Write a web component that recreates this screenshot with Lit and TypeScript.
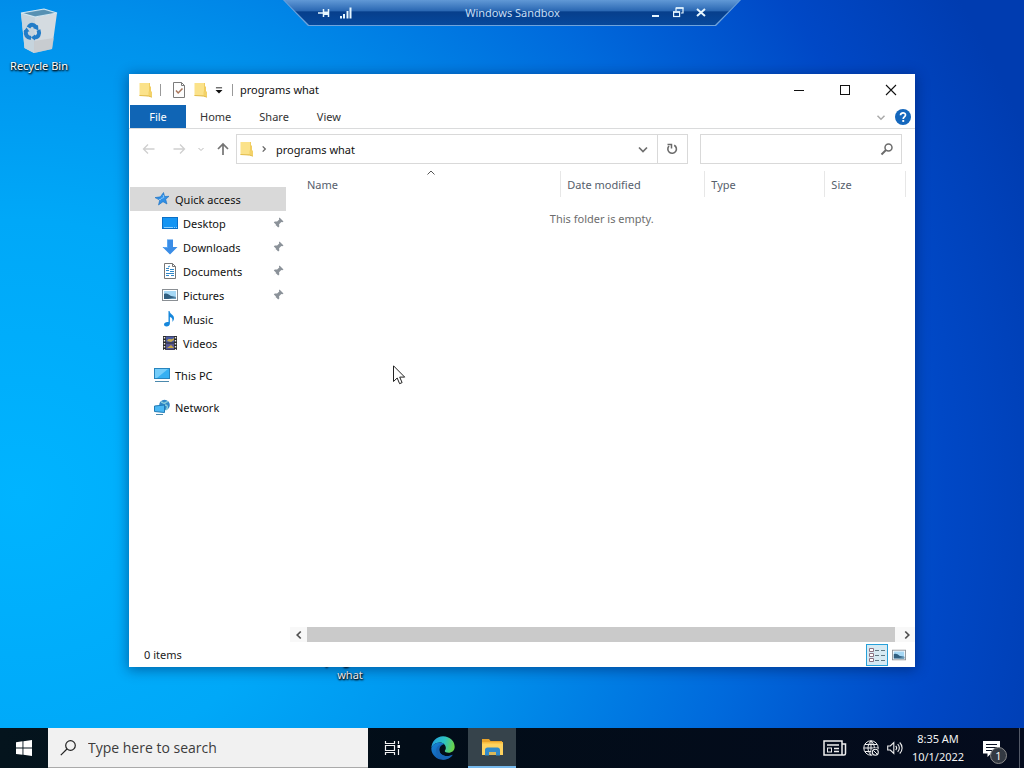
import { LitElement, html, css, svg, nothing } from "lit";
import { customElement, property } from "lit/decorators.js";

const icons: Record<string, unknown> = {
  star: svg`<path d="M9.500 1.500l1.100 4 4.400-.2-3.300 3 1.300 4.700-4-2.300-4.500 3.300 1.200-4.900L1 6.600l5.400-.8z" fill="#2f8fe6" stroke="#1b6fc0" stroke-width=".6"/><path d="M9.200 4l.6 2.600-3 .9M5 8.500l2 .2" stroke="#8cc8fa" fill="none"/>`,
  desktop: svg`<rect x=".5" y="2.500" width="15" height="11" fill="#1595f3" stroke="#0b6fc6"/><path d="M2 12.500h9M12 12.500h1M14 12.500h1" stroke="#8cd0ff"/>`,
  downloads: svg`<path d="M5 .5h6v7.500h4.500L8 15.500.5 8H5z" fill="#3b8de6"/><path d="M5.500 1v7.500H2" stroke="#5aa7f3" fill="none"/>`,
  documents: svg`<path d="M2.500.5h8l3 3v12h-11z" fill="#fff" stroke="#777"/><path d="M10.500.5v3h3" fill="none" stroke="#777"/><path d="M4 5.500h3M4 7.500h3M8 6.500h4M4 10.500h8M4 12.500h3M9 12.500h3M8 8.500h4" stroke="#3188c8"/><path d="M6 4l2-1" stroke="#3188c8"/>`,
  pictures: svg`<rect x=".5" y="2.500" width="15" height="11" fill="#fff" stroke="#8a8f94"/><rect x="2" y="4" width="12" height="8" fill="#a6d8f5"/><path d="M2 7c3-1 4 0 7 2l5 1v2H2z" fill="#315f80"/><path d="M6 12l8-2v2z" fill="#6b9bb8"/>`,
  music: svg`<path d="M7.500 0c.6 3.600 5 3.500 4.500 7.800-.2 1.500-.8 2.200-1.700 3 .8-3-.6-4.300-2.400-4.900v6.600c0 2-1.600 3-3.300 3-1.500 0-2.600-.7-2.600-2 0-1.600 2.200-2.900 4.500-2.400V0z" fill="#1687dc"/>`,
  videos: svg`<rect x="1" y="1" width="14" height="14" fill="#2b2b2b"/><rect x="4" y="1.500" width="8" height="6" fill="#4c5ba0"/><rect x="4" y="8.500" width="8" height="6" fill="#575896"/><path d="M5 6c2-4 4 0 7-3v2l-3 2z" fill="#c6aa4d"/><path d="M5 13l4-3 3 3z" fill="#c9a840"/><path d="M2.500 2v13M13.500 2v13" stroke="#eee" stroke-width="1.400" stroke-dasharray="1.500 1.500"/>`,
  pc: svg`<rect x=".5" y="1.500" width="15" height="10" fill="#35b0f3" stroke="#2884bd"/><path d="M1 2h13L3 11H1z" fill="#75cdfa"/><path d="M1 14.500h14" stroke="#4b89ad"/>`,
  network: svg`<circle cx="10.500" cy="6" r="5.300" fill="#3288c8"/><path d="M7 3c2 0 2 2 4 1s2-2 3-1M11 6c3 0 3 3 1 5" stroke="#89cdda" stroke-width="1.500" fill="none"/><path d="M.5 7l10-1v7.500l-10-1z" fill="#4bb8f4" stroke="#217bb5"/><path d="M2 15.500h7" stroke="#4b89ad"/>`,
  pin: svg`<path d="M9.500 2.500l4 4-1.200.8-1-.2-2.200 2.200.2 2.200-1.100 1-2.500-2.500L2.500 13.500 6 9.600 3.800 7.400l1-1 2.300.2 2.200-2.200-.4-1z" fill="#8b9299"/>`,
  folder: svg`<path d="M2.500 1h9.500v3l1 1v9.500l-10.500-1z" fill="#f1cd60"/><path d="M1.500 1h9.500v12.500l-9.500.5z" fill="#fbe28a"/><path d="M10.500 9.500h3.500v5.500l-3.500-1z" fill="#f3d269"/><path d="M1.500 13.500l9 .5 3.500 1.200" stroke="#e2bc4c" fill="none"/>`,
  props: svg`<path d="M2.500.5h8l3 3v12h-11z" fill="#fdfdfd" stroke="#7b7b7b"/><path d="M10.500.5v3h3" stroke="#7b7b7b" fill="none"/><path d="M5 8.500l2.200 2.500 4.300-4.500" stroke="#a9765c" stroke-width="1.500" fill="none"/>`,
  drop: svg`<path d="M4.500 5.500h7" stroke="#111"/><path d="M4 8h8l-4 4z" fill="#111"/>`,
  min: svg`<path d="M3 8.500h10" stroke="#111"/>`,
  max: svg`<rect x="3.500" y="3.500" width="9" height="9" fill="none" stroke="#111"/>`,
  close: svg`<path d="M3 3l10 10M13 3L3 13" stroke="#111" stroke-width="1.100"/>`,
  chevron: svg`<path d="M4 6.500l4 4 4-4" fill="none" stroke="currentColor" stroke-width="1.700"/>`,
  smallChevron: svg`<path d="M5.500 7l2.500 2.500L10.500 7" fill="none" stroke="currentColor"/>`,
  help: svg`<circle cx="8" cy="8" r="8" fill="#1467bd"/><path d="M5.500 6.200C5.500 3 10.600 3.200 10.500 6c0 1.800-2.300 1.900-2.300 3.900" fill="none" stroke="#fff" stroke-width="1.700"/><rect x="7.300" y="11" width="1.900" height="1.900" fill="#fff"/>`,
  back: svg`<path d="M13.500 8h-11M7 3.500L2.500 8 7 12.500" fill="none" stroke="#cfcfcf" stroke-width="1.300"/>`,
  forward: svg`<path d="M2.500 8h11M9 3.500L13.500 8 9 12.500" fill="none" stroke="#cfcfcf" stroke-width="1.300"/>`,
  up: svg`<path d="M8 14V3M3 8l5-5 5 5" fill="none" stroke="#747474" stroke-width="1.700"/>`,
  crumb: svg`<path d="M6.500 5l3 3-3 3" fill="none" stroke="#666" stroke-width="1.500"/>`,
  refresh: svg`<path d="M10.200 4.200A4.300 4.300 0 1 1 5 5" fill="none" stroke="#6b6b6b" stroke-width="1.600"/><path d="M3.500 3.500h4v4" fill="none" stroke="#6b6b6b" stroke-width="1.500"/>`,
  find: svg`<circle cx="9.500" cy="6.500" r="3.500" fill="none" stroke="#6c6c6c" stroke-width="1.500"/><path d="M7 9l-4.500 4.500" stroke="#6c6c6c" stroke-width="2"/>`,
  sort: svg`<path d="M4.500 9.500L8 6l3.500 3.500" fill="none" stroke="#555"/>`,
  left: svg`<path d="M10 4L6 8l4 4" fill="none" stroke="#505050" stroke-width="2"/>`,
  right: svg`<path d="M6 4l4 4-4 4" fill="none" stroke="#505050" stroke-width="2"/>`,
  details: svg`<path d="M.5 1.500h4v3h-4zM.5 6.500h4v3h-4zM.5 11.500h4v3h-4z" fill="#fff" stroke="#8b7283"/><path d="M6 3.500h4M12 3.500h4M6 8.500h4M12 8.500h4M6 13.500h4M12 13.500h4" stroke="#5f7884"/>`,
  barPin: svg`<path d="M2 8h5M7.500 4v8M12.500 4v8" stroke="#e6f6ff" stroke-width="1.500"/><path d="M8 6.500h4v3.500H8z" fill="#e6f6ff"/>`,
  signal: svg`<path d="M3 11v2.500M6 9v4.500M9.500 6v7.500M12.500 2.500v11" stroke="#e6f6ff" stroke-width="2"/>`,
  barMin: svg`<path d="M5 11h7" stroke="#e6f6ff" stroke-width="2"/>`,
  barRestore: svg`<path d="M6 6V3h7v5h-2" fill="none" stroke="#e6f6ff" stroke-width="1.200"/><path d="M6 3h7.500" stroke="#e6f6ff" stroke-width="1.500"/><rect x="3.600" y="7" width="6" height="4.500" fill="none" stroke="#e6f6ff" stroke-width="1.200"/><path d="M3 7h7" stroke="#e6f6ff" stroke-width="1.500"/>`,
  barClose: svg`<path d="M4 4l8 7M12 4l-8 7" stroke="#e6f6ff" stroke-width="2"/>`,
  start: svg`<path d="M0 2.200L6.500 1.300v6.300H0zM7.400 1.200L16 0v7.600H7.400zM0 8.500h6.500v6.300L0 13.900zM7.400 8.500H16V16l-8.600-1.200z" fill="#fff"/>`,
  search: svg`<circle cx="10.500" cy="5.500" r="4.800" fill="none" stroke="#222" stroke-width="1.200"/><path d="M7 9L.8 15.200" stroke="#222" stroke-width="1.200"/>`,
  task: svg`<path d="M1.500 1v2.500h9V1M1.500 15v-2.500h9V15" fill="none" stroke="#f2f2f2" stroke-width="1.200"/><path d="M1.500 5.500h9v5h-9z" fill="none" stroke="#f2f2f2" stroke-width="1.200"/><path d="M14.500 1v3M14.500 9v6" stroke="#f2f2f2" stroke-width="1.200"/><rect x="13.500" y="5" width="2.500" height="3" fill="#fff"/>`,
  edge: svg`<defs><linearGradient id="t" x1="0" x2="1" y1=".2" y2=".4"><stop offset="0" stop-color="#239fdf"/><stop offset=".55" stop-color="#2cc3c4"/><stop offset="1" stop-color="#6ad34a"/></linearGradient><linearGradient id="b" x1="0" x2="1" y2="1"><stop stop-color="#1686d9"/><stop offset="1" stop-color="#124a9c"/></linearGradient></defs><path d="M.3 8A7.800 7.800 0 0 1 8 .2c4.700 0 7.800 3.400 7.800 6.900 0 2.500-1.800 4-4.100 4-1.600 0-2.500-.5-2.500-1.100 0-.5.7-.8.7-2C9.900 6 8.300 4.300 5.800 4.300 3 4.300 1 6.200.3 8z" fill="url(#t)"/><path d="M.2 8.300C1 6 3 4.300 5.800 4.300c1.400 0 2.500.5 3.200 1.200C7.200 5.400 5.500 7 5.500 9.200c0 2.500 2.300 4.200 5 4.200 1.500 0 2.900-.5 4-.9C13.200 14.500 10.800 15.800 8 15.800A7.700 7.700 0 0 1 .2 8.300z" fill="url(#b)"/><path d="M5.500 9.200C5.500 7 7.200 5.400 9 5.500 5 5 2.800 8 3.500 10.800c.7 2.700 2.800 4.700 5 5 2.600-.1 4.700-1.400 6-3.300-1.100.4-2.500.9-4 .9-2.700 0-5-1.700-5-4.200z" fill="#1765b4"/>`,
  explorer: svg`<path d="M1 1h7l1.500 2H21v4H1z" fill="#e9a32b"/><path d="M1 4h21v13H1z" fill="#ffd35f"/><path d="M1 4h21v1.500H1z" fill="#f9bd3f"/><path d="M4 17.500V12c0-1.500 1-2.500 2.500-2.500h10c1.500 0 2.500 1 2.500 2.500v5.500h-4v-3.500H8v3.500z" fill="#318ac9"/><path d="M8 14h7v3H8z" fill="#d9b85a"/>`,
  news: svg`<path d="M1 1h18v14H1zM19 4h3.500v9.500c0 1-.5 1.500-1.500 1.500h-2" fill="none" stroke="#eee" stroke-width="1.500"/><path d="M4 5h12M11 8.500h5M11 11.500h5" stroke="#eee" stroke-width="1.300"/><rect x="4.500" y="8" width="4" height="4" fill="none" stroke="#eee"/>`,
  globe: svg`<g fill="none" stroke="#eee"><circle cx="8" cy="8" r="7.200"/><path d="M8 .8v14.400M.8 8h14.400M2 4.500h12M2 11.500h8M8 .8c-4 4-4 10.500 0 14.400M8 .8c3 3 3.500 5.500 3.300 8"/></g><circle cx="12.300" cy="12.300" r="4.300" fill="#050d1d"/><circle cx="12.300" cy="12.300" r="3" fill="none" stroke="#eee" stroke-width="1.100"/><path d="M10.300 10.300l4 4" stroke="#eee"/>`,
  volume: svg`<g fill="none" stroke="#eee" stroke-width="1.100"><path d="M.7 6h2.600L6.800 2.500v11L3.300 10H.7zM8.700 6c1.200 1.200 1.200 2.800 0 4M10.700 4.200c2.200 2.200 2.200 5.400 0 7.600M12.700 2.500c3.200 3.200 3.200 7.800 0 11"/></g>`,
  note: svg`<path d="M0 1h17v12.500h-9L4.500 17v-3.500H0z" fill="#fff"/><path d="M3 4.500h11M3 7.500h11M3 10.500h8" stroke="#0a1224" stroke-width="1.100"/>`,
  bin: svg`<path d="M1 5l14 4 22-4-5 36-18 4L4.500 40z" fill="#d4dbe0"/><path d="M1 5L24 1l13 4-22 4z" fill="#6fa0bd"/><path d="M4 5.500L24 2l10 3-19 3z" fill="#5791b3"/><path d="M1 5l14 4-1 36-9.500-5z" fill="#c6d4dd"/><path d="M1 5l14 4 22-4-13-4z" fill="none" stroke="#d5e8f2" stroke-width="1.200"/><path d="M14 33l20-3-2 11-18 4z" fill="#bfc1c5" opacity=".6"/><g fill="none" stroke="#217cc8" stroke-width="4"><path d="M8.500 19.500c2-4 5-3.500 7.500-.5"/><path d="M18.500 22c1.500 4 0 7.500-4.500 7.500"/><path d="M11 30c-4-.5-6-3-5-7.500"/></g><path d="M13 20l5-3 .5 5.500zM15 26.500v6l-4-3zM3.500 24l3-4.500 3 4z" fill="#217cc8"/>`,
};

const icon = (name: string, width = 16, height = 16, box = "0 0 16 16") =>
  html`<svg width=${width} height=${height} viewBox=${box} aria-hidden="true">${icons[name]}</svg>`;

const base = css`
  *, *::before, *::after { box-sizing: border-box; }
  svg { display: block; flex: none; }
  button, input { font: inherit; color: inherit; margin: 0; padding: 0; border: 0; background: none; border-radius: 0; }
  button { display: flex; align-items: center; justify-content: center; }
  a { color: inherit; text-decoration: none; }
  ul { list-style: none; margin: 0; padding: 0; }
`;

@customElement("connection-bar")
class ConnectionBar extends LitElement {
  static styles = [base, css`
    :host { display: block; }
    .edge { height: 26px; padding: 0 1px 1px; background: #6fa4dc; clip-path: polygon(0 0, 100% 0, calc(100% - 25px) 100%, 25px 100%); }
    .bar { height: 25px; padding: 0 31px 0 32px; display: grid; grid-template-columns: 1fr auto 1fr; align-items: center; color: #c5def5; background: linear-gradient(#6199d6, #2c69b4 42%, #073f8c 48%, #06489c); clip-path: polygon(0 0, 100% 0, calc(100% - 25px) 100%, 25px 100%); }
    .group { display: flex; gap: 6px; }
    .group.end { justify-content: flex-end; gap: 7px; }
  `];
  render() {
    return html`<div class="edge"><div class="bar">
      <div class="group"><button aria-label="Pin">${icon("barPin")}</button><button aria-label="Connection">${icon("signal")}</button></div>
      <span>Windows Sandbox</span>
      <div class="group end"><button aria-label="Minimize">${icon("barMin")}</button><button aria-label="Restore">${icon("barRestore")}</button><button aria-label="Close">${icon("barClose")}</button></div>
    </div></div>`;
  }
}

@customElement("nav-tree")
class NavTree extends LitElement {
  static styles = [base, css`
    :host { display: block; padding: 18px 4px 0 1px; }
    .row { display: flex; align-items: center; gap: 5px; height: 24px; padding-left: 32px; }
    .top { padding-left: 24px; }
    .current { background: #d9d9d9; }
    .spaced { margin-top: 8px; }
    .label { flex: 1; }
  `];
  items = [
    { name: "Quick access", icon: "star", top: true, current: true },
    { name: "Desktop", icon: "desktop", pinned: true },
    { name: "Downloads", icon: "downloads", pinned: true },
    { name: "Documents", icon: "documents", pinned: true },
    { name: "Pictures", icon: "pictures", pinned: true },
    { name: "Music", icon: "music" },
    { name: "Videos", icon: "videos" },
    { name: "This PC", icon: "pc", top: true, spaced: true },
    { name: "Network", icon: "network", top: true, spaced: true },
  ];
  render() {
    return html`<ul>${this.items.map((i) => html`<li class=${i.spaced ? "spaced" : ""}>
      <a href="#" class="row ${i.top ? "top" : ""} ${i.current ? "current" : ""}">${icon(i.icon)}<span class="label">${i.name}</span>${i.pinned ? icon("pin") : nothing}</a></li>`)}</ul>`;
  }
}

@customElement("explorer-window")
class ExplorerWindow extends LitElement {
  @property() folder = "";
  static styles = [base, css`
    :host { display: flex; flex-direction: column; background: #fff; box-shadow: 0 2px 12px 1px rgba(0, 20, 70, .45); color: #111; }
    .title { display: flex; align-items: center; height: 31px; padding: 0 1px 0 9px; }
    .quick { display: flex; align-items: center; }
    .quick button { width: 22px; }
    .quick .custom { width: 14px; }
    .bar { width: 1px; height: 12px; margin: 0 7px 0 6px; background: #999; }
    .name { flex: 1; margin: 0; font: inherit; }
    .caption button { width: 46px; height: 31px; }
    .caption, .ribbon, .address, .field, .tabs { display: flex; align-items: center; }
    .ribbon { height: 24px; border-bottom: 1px solid #dadbdc; padding: 0 4px 0 1px; gap: 6px; color: #aaa; }
    .tabs { flex: 1; color: #333; }
    .tabs button { height: 23px; padding: 0 14px; }
    .tabs .file { width: 56px; background: #1065b5; color: #fff; }
    .address { height: 40px; padding: 0 13px 0 12px; }
    .back { margin-right: 14px; }
    .history { color: #bbb; margin: 0 6px; width: 16px; }
    .up { margin-right: 5px; }
    .field { height: 30px; border: 1px solid #d9d9d9; }
    .path { flex: 452; color: #6f6f6f; padding-left: 2px; }
    .path input { flex: 1; min-width: 0; color: #111; }
    .path .refresh { align-self: stretch; width: 30px; border-left: 1px solid #d9d9d9; }
    .path .more { width: 28px; }
    .crumb { margin: 0 4px 0 1px; }
    .find { flex: 202; margin-left: 12px; }
    .find input { flex: 1; min-width: 0; height: 28px; padding-left: 6px; outline: 0; }
    .find button { width: 28px; }
    .body { flex: 1; min-height: 0; display: grid; grid-template-columns: 161px 1fr; }
    .list { display: flex; flex-direction: column; min-width: 0; }
    table { border-collapse: collapse; table-layout: fixed; width: calc(100% - 9px); }
    th { height: 26px; padding: 0 0 0 6px; font-weight: 400; text-align: left; color: #56606c; border-right: 1px solid #e7e7e7; position: relative; }
    th:first-child { padding-left: 17px; }
    .sort { position: absolute; left: 49%; top: -6px; }
    td { padding: 14px 0 0 8px; text-align: center; color: #6d6d6d; }
    .c1 { width: 44%; } .c2 { width: 23.400%; } .c3 { width: 19.500%; }
    .head { padding-top: 2px; flex: 1; }
    .scroll { display: flex; align-items: center; height: 15px; color: #505050; background: #f8f8f8; }
    .scroll button { width: 17px; height: 15px; }
    .thumb { flex: 1; height: 15px; margin-right: 3px; background: #cacaca; }
    .status { display: flex; align-items: center; height: 25px; padding: 0 5px 0 15px; color: #222; }
    .count { flex: 1; }
    .view { width: 22px; height: 22px; }
    .on { border: 1px solid #26a0da; background: #d6eaf3; }
  `];
  render() {
    return html`
      <div class="title">
        <div class="quick">${icon("folder")}<span class="bar"></span><button aria-label="Properties">${icon("props")}</button><button aria-label="New folder">${icon("folder")}</button><button class="custom" aria-label="Customize">${icon("drop", 14, 14)}</button><span class="bar"></span></div>
        <h1 class="name">${this.folder}</h1>
        <div class="caption"><button aria-label="Minimize">${icon("min")}</button><button aria-label="Maximize">${icon("max")}</button><button aria-label="Close">${icon("close")}</button></div>
      </div>
      <div class="ribbon"><div class="tabs"><button class="file">File</button><button>Home</button><button>Share</button><button>View</button></div><button aria-label="Expand">${icon("chevron", 16, 14)}</button><button aria-label="Help">${icon("help")}</button></div>
      <div class="address">
        <button class="back" aria-label="Back">${icon("back")}</button><button aria-label="Forward">${icon("forward")}</button>
        <button class="history" aria-label="Recent">${icon("smallChevron")}</button><button class="up" aria-label="Up">${icon("up")}</button>
        <div class="field path">${icon("folder")}<span class="crumb">${icon("crumb", 16, 14)}</span><input aria-label="Address" .value=${this.folder} /><button class="more" aria-label="Previous locations">${icon("chevron")}</button><button class="refresh" aria-label="Refresh">${icon("refresh")}</button></div>
        <div class="field find"><input type="search" aria-label="Search" /><button aria-label="Search">${icon("find")}</button></div>
      </div>
      <div class="body">
        <nav-tree></nav-tree>
        <div class="list">
          <div class="head"><table><colgroup><col class="c1" /><col class="c2" /><col class="c3" /><col /></colgroup>
            <thead><tr><th>Name<span class="sort">${icon("sort", 18, 16)}</span></th><th>Date modified</th><th>Type</th><th>Size</th></tr></thead>
            <tbody><tr><td colspan="4">This folder is empty.</td></tr></tbody></table></div>
          <div class="scroll"><button aria-label="Scroll left">${icon("left", 14, 14)}</button><div class="thumb"></div><button aria-label="Scroll right">${icon("right", 14, 14)}</button></div>
        </div>
      </div>
      <div class="status"><span class="count">0 items</span><button class="view on" aria-label="Details">${icon("details", 17, 16, "0 0 17 16")}</button><button class="view" aria-label="Large icons">${icon("pictures", 14, 14)}</button></div>`;
  }
}

@customElement("task-bar")
class TaskBar extends LitElement {
  static styles = [base, css`
    :host { display: flex; height: 40px; background: linear-gradient(90deg, #04141d, #020d18 40%, #040b1d); color: #f2f2f2; }
    .app { width: 48px; height: 40px; }
    .search { display: flex; align-items: center; gap: 12px; width: 320px; padding-left: 12px; background: #f1f1f1; border-bottom: 1px solid #aaa; color: #3c3c3c; font: 14px/20px "Open Sans", "Noto Sans", sans-serif; }
    .search input { flex: 1; min-width: 0; height: 24px; outline: 0; }
    .search input::placeholder { color: #3c3c3c; opacity: 1; }
    .edge { margin-left: 3px; }
    .open { margin-left: 1px; background: #36434b; border-bottom: 2px solid #76b9ed; }
    .tray { display: flex; align-items: center; margin-left: auto; }
    .news { margin-right: 16px; }
    .globe { margin-right: 8px; }
    .clock { width: 70px; text-align: center; line-height: 18px; display: block; }
    .note { position: relative; width: 46px; height: 40px; padding-right: 10px; }
    .badge { position: absolute; left: 17px; top: 19px; width: 17px; height: 17px; border: 1px solid #8b8b8b; border-radius: 50%; background: #333942; line-height: 15px; text-align: center; }
    .peek { width: 5px; height: 40px; border-left: 1px solid #535967; }
  `];
  render() {
    return html`
      <button class="app" aria-label="Start">${icon("start")}</button>
      <label class="search">${icon("search")}<input type="text" placeholder="Type here to search" aria-label="Type here to search" /></label>
      <button class="app" aria-label="Task view">${icon("task")}</button>
      <button class="app edge" aria-label="Edge">${icon("edge", 24, 24)}</button>
      <button class="app open" aria-label="File Explorer">${icon("explorer", 23, 18, "0 0 23 18")}</button>
      <div class="tray">
        <button class="news" aria-label="News">${icon("news", 24, 16, "0 0 24 16")}</button>
        <button class="globe" aria-label="Network">${icon("globe")}</button>
        <button aria-label="Volume">${icon("volume")}</button>
        <button class="clock">8:35 AM<br />10/1/2022</button>
        <button class="note" aria-label="Notifications">${icon("note", 17, 17, "0 0 17 17")}<span class="badge">1</span></button>
        <button class="peek" aria-label="Show desktop"></button>
      </div>`;
  }
}

@customElement("app-root")
class AppRoot extends LitElement {
  static styles = [base, css`
    :host { display: flex; flex-direction: column; height: 100vh; overflow: hidden; font: 11px/15px "Noto Sans", "Open Sans", sans-serif; }
    .desktop { position: relative; flex: 1; background: radial-gradient(ellipse 105% 140% at 2% 68%, #00b4ff 0%, #00a8f8 27%, #0092ec 46%, #006adc 68%, #0048c6 86%, #003cb0 100%); }
    .connection { position: absolute; top: 0; left: 50%; width: 458px; transform: translateX(-50%); }
    .shortcut { position: absolute; width: 74px; display: flex; flex-direction: column; align-items: center; gap: 4px; color: #fff; text-align: center; text-shadow: 0 1px 2px #000, 1px 1px 2px #000; }
    .recycle { left: 2px; top: 8px; }
    .folder { left: 313px; top: 600px; }
    .window { position: absolute; inset: 74px 109px 61px 129px; }
    .cursor { position: absolute; left: 393px; top: 365px; }
  `];
  render() {
    return html`<main class="desktop">
        <a class="shortcut recycle" href="#">${icon("bin", 39, 46, "0 0 39 46")}<span>Recycle Bin</span></a>
        <a class="shortcut folder" href="#">${icon("folder", 48, 48)}<span>programs<br />what</span></a>
        <connection-bar class="connection"></connection-bar>
        <explorer-window class="window" folder="programs what"></explorer-window>
        <svg class="cursor" width="13" height="20" viewBox="0 0 13 20" aria-hidden="true"><path d="M.5.8v15.700l3.700-3.500 2.400 5.700 2.500-1.100-2.400-5.500h5z" fill="#fff" stroke="#222"/></svg>
      </main>
      <task-bar></task-bar>`;
  }
}
